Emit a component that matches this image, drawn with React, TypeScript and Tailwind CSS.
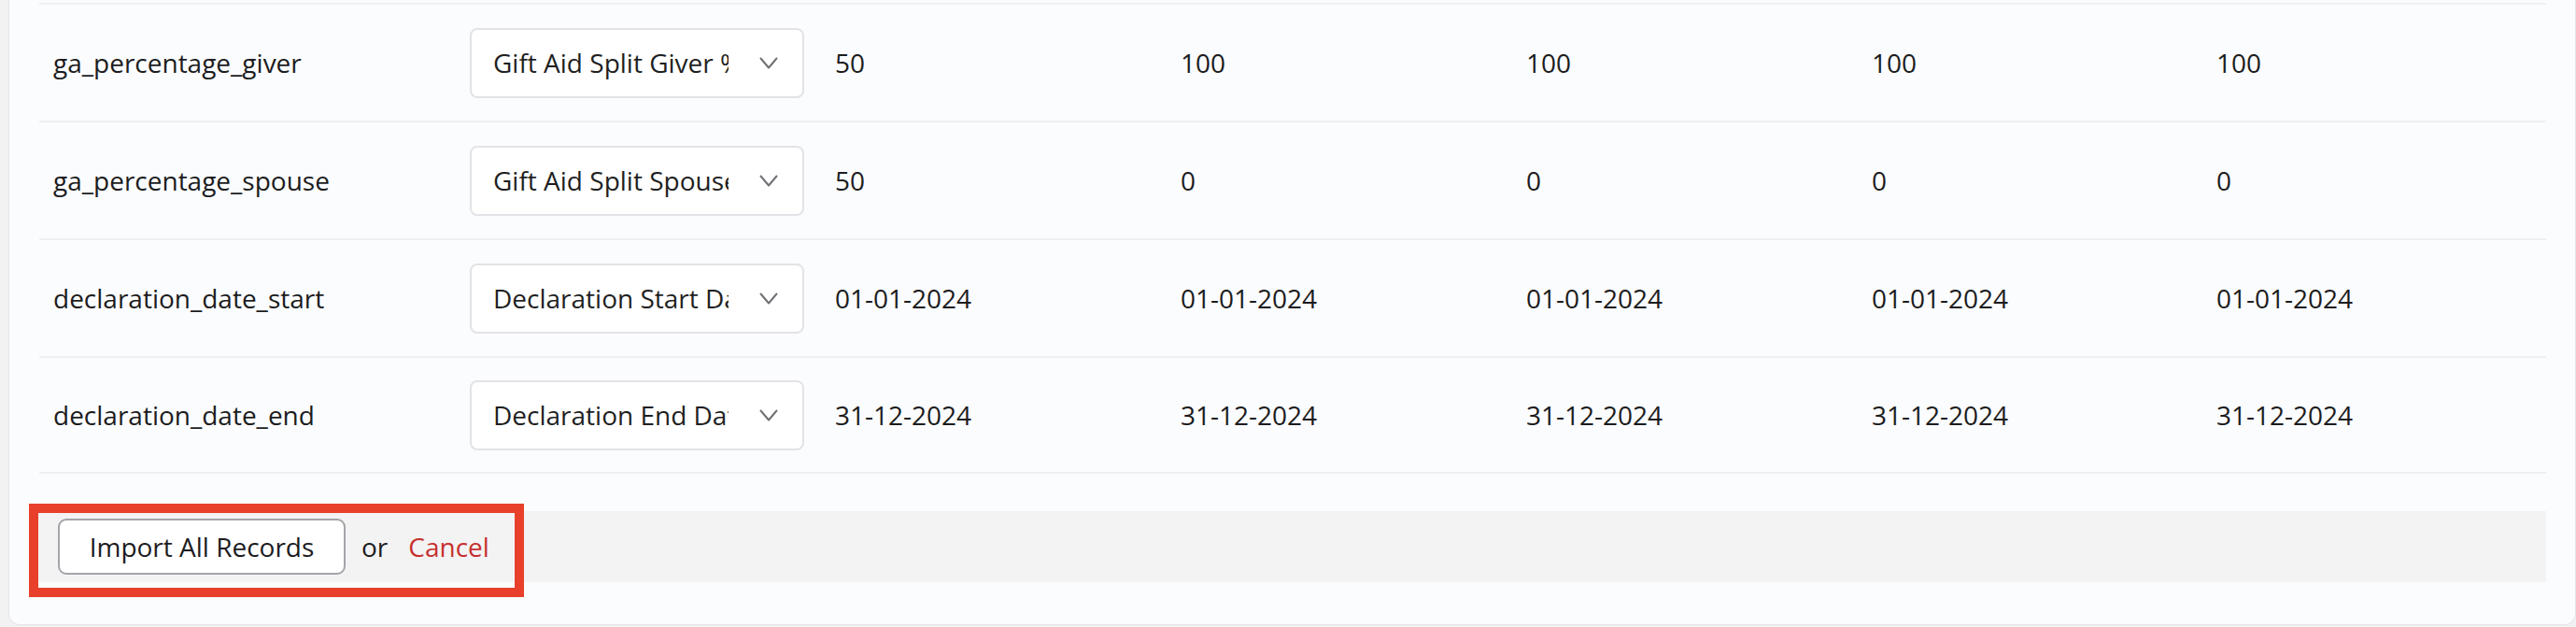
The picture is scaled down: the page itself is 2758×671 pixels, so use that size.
const rows = [
  { field: "ga_percentage_giver", mapped: "Gift Aid Split Giver %", values: ["50", "100", "100", "100", "100"] },
  { field: "ga_percentage_spouse", mapped: "Gift Aid Split Spouse %", values: ["50", "0", "0", "0", "0"] },
  {
    field: "declaration_date_start",
    mapped: "Declaration Start Date",
    values: ["01-01-2024", "01-01-2024", "01-01-2024", "01-01-2024", "01-01-2024"],
  },
  {
    field: "declaration_date_end",
    mapped: "Declaration End Date",
    values: ["31-12-2024", "31-12-2024", "31-12-2024", "31-12-2024", "31-12-2024"],
  },
];

function MappingSelect({ label }: { label: string }) {
  return (
    <div className="flex h-[75px] w-[358px] items-center rounded-[8px] border-2 border-[#e3e3e7] bg-white pl-[23px] pr-[26px]">
      <span className="w-[252px] overflow-hidden whitespace-nowrap text-[#1f1f22]">{label}</span>
      <svg className="ml-auto" width="20" height="13" viewBox="0 0 20 13" fill="none">
        <polyline points="1.5,1.5 10,11.5 18.5,1.5" stroke="#707075" strokeWidth="2" strokeLinecap="round" strokeLinejoin="round" />
      </svg>
    </div>
  );
}

export default function App() {
  return (
    <div
      className="h-[671px] overflow-hidden bg-[#f2f2f3] pl-[9px] text-[28px] text-[#1c1c1e]"
      style={{ fontFamily: '"Open Sans", "Noto Sans", sans-serif' }}
    >
      <div className="relative rounded-b-[12px] border-x border-b border-[#e4e4e7] bg-[#fbfcfd] pb-[45px] pl-[32px] pr-[31px] pt-[3px]">
        {rows.map((row, i) => (
          <div
            key={row.field}
            className={
              "grid h-[126px] grid-cols-[461px_391px_370px_370px_370px_369px_1fr] items-center border-t-2 border-[#eff0f3] " +
              (i === rows.length - 1 ? "border-b-2" : "")
            }
          >
            <div className="pl-[15px]">{row.field}</div>
            <div>
              <MappingSelect label={row.mapped} />
            </div>
            {row.values.map((v, j) => (
              <div key={j}>{v}</div>
            ))}
          </div>
        ))}

        {/* footer actions */}
        <div className="-ml-[2px] mt-[40px] flex h-[76px] items-center bg-[#f3f3f4] pl-[22px]">
          <button className="h-[60px] w-[308px] rounded-[9px] border-2 border-[#a4a4aa] bg-white text-[28px] text-[#1c1c1e]">
            Import All Records
          </button>
          <span className="ml-[17px]">or</span>
          <a className="ml-[22px] cursor-pointer text-[#c7302f]">Cancel</a>
        </div>

        {/* highlight box */}
        <div className="pointer-events-none absolute left-[21px] top-[539px] h-[100px] w-[530px] border-[10px] border-[#e8402a]" />
      </div>
    </div>
  );
}
